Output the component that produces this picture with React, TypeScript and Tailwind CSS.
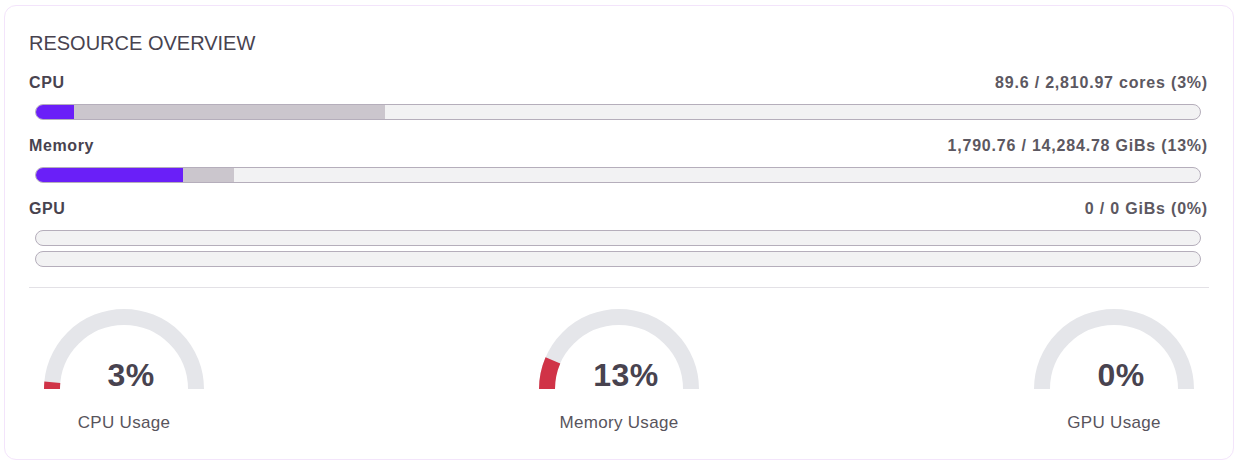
import React from 'react';

const bars = [
  { name: 'CPU', value: '89.6 / 2,810.97 cores (3%)', bars: [{ used: 3.3, req: 30 }] },
  { name: 'Memory', value: '1,790.76 / 14,284.78 GiBs (13%)', bars: [{ used: 12.6, req: 17 }] },
  { name: 'GPU', value: '0 / 0 GiBs (0%)', bars: [{ used: 0, req: 0 }, { used: 0, req: 0 }] },
];

const gauges = [
  { label: 'CPU Usage', pct: 3 },
  { label: 'Memory Usage', pct: 13 },
  { label: 'GPU Usage', pct: 0 },
];

const Bar = ({ used, req }: { used: number; req: number }) => (
  <div className="relative ml-[6px] mr-[8px] h-4 rounded-full border border-[#b5aebb] bg-[#f2f2f3] overflow-hidden">
    {/* requested */}
    <div className="absolute inset-y-0 left-0 bg-[#cbc6cd]" style={{ width: `${req}%` }} />
    {/* used */}
    <div className="absolute inset-y-0 left-0 bg-[#6a1ff8]" style={{ width: `${used}%` }} />
  </div>
);

const Gauge = ({ pct, label }: { pct: number; label: string }) => {
  const r = 72;
  const cx = 80;
  const cy = 80;
  const a = Math.PI * (1 - pct / 100);
  const x = cx + r * Math.cos(a);
  const y = cy - r * Math.sin(a);
  return (
    <div className="flex flex-col items-center">
      <div className="relative w-[160px] h-[80px]">
        <svg width="160" height="80" viewBox="0 0 160 80">
          <path d={`M ${cx - r} ${cy} A ${r} ${r} 0 0 1 ${cx + r} ${cy}`} fill="none" stroke="#e5e6ea" strokeWidth="16" />
          {pct > 0 && (
            <path d={`M ${cx - r} ${cy} A ${r} ${r} 0 0 1 ${x} ${y}`} fill="none" stroke="#d03347" strokeWidth="16" />
          )}
        </svg>
        <div className="absolute inset-x-0 bottom-[-6px] pl-[14px] text-center text-[32px] font-bold leading-[40px] tracking-[0.5px] text-[#48434f]">
          {pct}%
        </div>
      </div>
      <div className="mt-[23px] text-[17px] leading-[22px] tracking-[0.3px] text-[#58545c]">{label}</div>
    </div>
  );
};

export default function App() {
  return (
    <div className="bg-white min-h-[472px] pt-[5px] pl-1" style={{ fontFamily: '"Liberation Sans", Arial, sans-serif' }}>
      <div className="w-[1230px] rounded-xl border border-[#f3e4fb] bg-white px-6 pt-6 pb-[25px]">
        <div className="flex flex-col gap-4">
          <h2 className="text-[20px] leading-[27px] text-[#48434f]">RESOURCE OVERVIEW</h2>
          {bars.map((b) => (
            <div key={b.name}>
              <div className="flex items-center justify-between h-5 pr-[1px]">
                <span className="text-[16px] font-bold tracking-[0.6px] text-[#48434f]">{b.name}</span>
                <span className="text-[16px] font-bold tracking-[0.8px] text-[#5c5861]">{b.value}</span>
              </div>
              <div className="mt-[11px] flex flex-col gap-[5px]">
                {b.bars.map((x, i) => (
                  <Bar key={i} used={x.used} req={x.req} />
                ))}
              </div>
            </div>
          ))}
        </div>
        <div className="mt-5 border-t border-[#e3e1e6]" />
        <div className="mt-[21px] flex justify-between px-[15px]">
          {gauges.map((g) => (
            <Gauge key={g.label} pct={g.pct} label={g.label} />
          ))}
        </div>
      </div>
    </div>
  );
}
